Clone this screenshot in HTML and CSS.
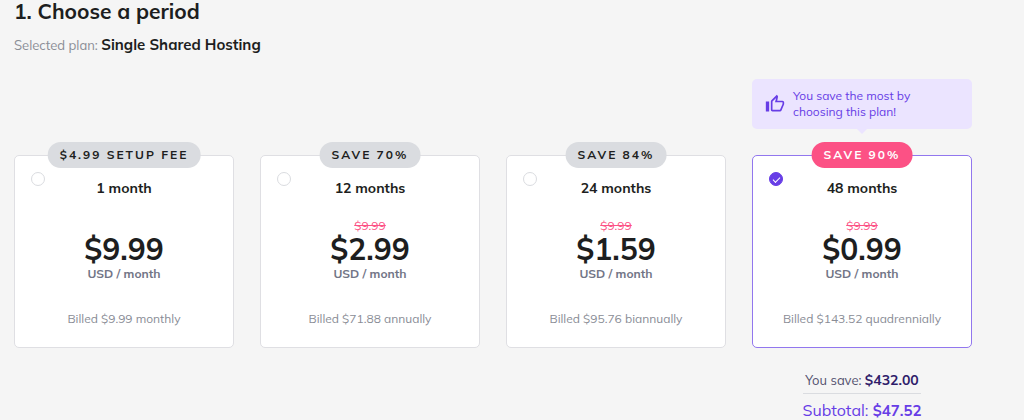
FILE: index.html
```html
<!DOCTYPE html>
<html lang="en">
<head>
<meta charset="UTF-8">
<meta name="viewport" content="width=device-width, initial-scale=1.0">
<title>Choose a period</title>
<link rel="stylesheet" href="styles.css">
</head>
<body>

<main class="period">
  <h1 class="title">1. Choose a period</h1>
  <p class="selected-plan">Selected plan: <strong>Single Shared Hosting</strong></p>

  <form class="plans">
    <!-- Best plan hint -->
    <div class="hint">
      <svg class="hint-icon" viewBox="0 0 24 24" aria-hidden="true">
        <path d="M9 21h9c.83 0 1.54-.5 1.84-1.22l3.02-7.05c.09-.23.14-.47.14-.73v-2c0-1.1-.9-2-2-2h-6.31l.95-4.57.03-.32c0-.41-.17-.79-.44-1.06L14.17 1 7.58 7.59C7.22 7.95 7 8.45 7 9v10c0 1.1.9 2 2 2zM9 9l4.34-4.34L12 10h9v2l-3 7H9V9zM1 9h4v12H1z"/>
      </svg>
      <p class="hint-text">You save the most by choosing this plan!</p>
    </div>

    <!-- Periods -->
    <label class="plan">
      <span class="badge">$4.99 SETUP FEE</span>
      <input class="plan-radio" type="radio" name="period" value="1">
      <span class="plan-name">1 month</span>
      <span class="old-price"></span>
      <span class="price">$9.99</span>
      <span class="unit">USD / month</span>
      <span class="billed">Billed $9.99 monthly</span>
    </label>

    <label class="plan">
      <span class="badge">SAVE 70%</span>
      <input class="plan-radio" type="radio" name="period" value="12">
      <span class="plan-name">12 months</span>
      <s class="old-price">$9.99</s>
      <span class="price">$2.99</span>
      <span class="unit">USD / month</span>
      <span class="billed">Billed $71.88 annually</span>
    </label>

    <label class="plan">
      <span class="badge">SAVE 84%</span>
      <input class="plan-radio" type="radio" name="period" value="24">
      <span class="plan-name">24 months</span>
      <s class="old-price">$9.99</s>
      <span class="price">$1.59</span>
      <span class="unit">USD / month</span>
      <span class="billed">Billed $95.76 biannually</span>
    </label>

    <label class="plan plan-active">
      <span class="badge badge-pink">SAVE 90%</span>
      <input class="plan-radio" type="radio" name="period" value="48" checked>
      <span class="plan-name">48 months</span>
      <s class="old-price">$9.99</s>
      <span class="price">$0.99</span>
      <span class="unit">USD / month</span>
      <span class="billed">Billed $143.52 quadrennially</span>
    </label>

    <!-- Totals -->
    <div class="totals">
      <p class="saved">You save: <strong>$432.00</strong></p>
      <p class="subtotal">Subtotal: <strong>$47.52</strong></p>
    </div>
  </form>
</main>

</body>
</html>
```
FILE: styles.css
```css
* {
  box-sizing: border-box;
}
body {
  margin: 0;
  background-color: #f5f5f5;
  color: #1d1e20;
  font-family: 'Mulish', 'Muli', 'Lato', sans-serif;
  font-size: 14px;
  line-height: 16px;
}
p, h1 {
  margin: 0;
}
.period {
  padding: 0 52px 0 14px;
}
.title {
  font-size: 21px;
  line-height: 22px;
}
.selected-plan {
  margin-top: 13px;
  font-size: 13px;
  line-height: 20px;
  color: #8a8d96;
}
.selected-plan strong {
  font-size: 15px;
  color: #1d1e20;
}
.plans {
  display: grid;
  grid-template-columns: repeat(4, 1fr);
  column-gap: 26px;
  margin-top: 24px;
}

/* hint */
.hint {
  grid-column: 4;
  position: relative;
  display: flex;
  align-items: center;
  gap: 8px;
  margin-bottom: 26px;
  padding: 9px 40px 9px 13px;
  border-radius: 5px;
  background-color: #ebe4ff;
  color: #673de6;
}
.hint::after {
  content: "";
  position: absolute;
  top: 100%;
  left: 50%;
  margin-left: -5px;
  border: 5px solid transparent;
  border-top-color: #ebe4ff;
  border-bottom: 0;
}
.hint-icon {
  flex: none;
  width: 20px;
  height: 20px;
  fill: currentColor;
}
.hint-text {
  font-size: 12px;
}

/* plan card */
.plan {
  grid-row: 2;
  position: relative;
  display: flex;
  flex-direction: column;
  align-items: center;
  padding: 23px 8px 20px;
  border: 1px solid #dfdfe3;
  border-radius: 5px;
  background-color: #fff;
  cursor: pointer;
}
.plan-active {
  border-color: #9277ee;
}
.badge {
  position: absolute;
  top: -14px;
  left: 50%;
  transform: translateX(-50%);
  padding: 0 12px;
  border-radius: 13px;
  background-color: #dadce0;
  font-size: 12px;
  font-weight: bold;
  line-height: 26px;
  letter-spacing: 2px;
  white-space: nowrap;
}
.badge-pink {
  background-color: #fc5185;
  color: #fff;
}
.plan-radio {
  appearance: none;
  position: absolute;
  top: 16px;
  left: 16px;
  width: 14px;
  height: 14px;
  margin: 0;
  border: 1px solid #dadce0;
  border-radius: 50%;
}
.plan-radio:checked {
  border-color: #673de6;
  background-color: #673de6;
}
.plan-radio:checked::before {
  content: "";
  display: block;
  width: 6px;
  height: 3px;
  margin: 4px 3px;
  border: solid #fff;
  border-width: 0 0 1px 1px;
  transform: rotate(-45deg);
}
.plan-name {
  font-weight: bold;
  line-height: 18px;
}
.old-price {
  height: 16px;
  margin-top: 21px;
  font-size: 12px;
  color: #fc5185;
}
.price {
  font-size: 30px;
  font-weight: bold;
  line-height: 30px;
}
.unit {
  margin-top: 2px;
  font-size: 12px;
  font-weight: bold;
  color: #727586;
}
.billed {
  margin-top: 29px;
  font-size: 12px;
  color: #8a8d96;
}

/* totals */
.totals {
  grid-column: 4;
  grid-row: 3;
  justify-self: center;
  margin-top: 22px;
}
.saved {
  padding-bottom: 3px;
  border-bottom: 1px solid #dadce0;
  font-size: 13px;
  line-height: 20px;
  color: #54526f;
  text-align: center;
}
.saved strong {
  font-size: 14px;
  color: #2f1c6a;
}
.subtotal {
  margin-top: 6px;
  font-size: 16px;
  line-height: 20px;
  color: #673de6;
}
.subtotal strong {
  font-size: 15px;
}
```
